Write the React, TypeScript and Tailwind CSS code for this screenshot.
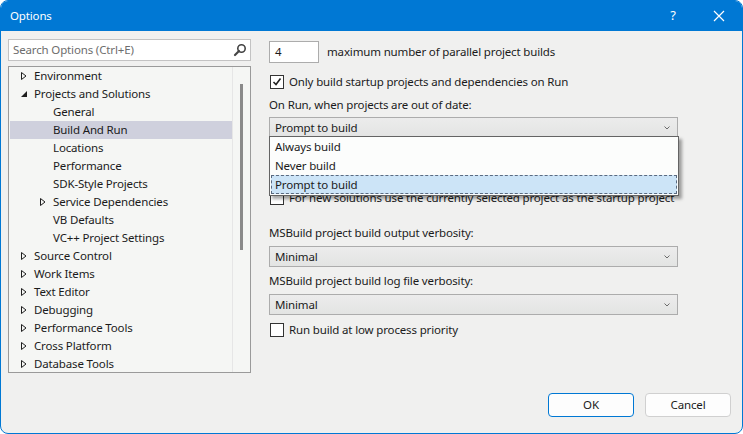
import React from 'react';

const font = { fontFamily: '"Segoe UI", "Noto Sans", "Open Sans", sans-serif', letterSpacing: '-0.15px' };

interface TreeItem {
  label: string;
  level: number;
  arrow?: 'closed' | 'open';
  selected?: boolean;
}

const TREE: TreeItem[] = [
  { label: 'Environment', level: 0, arrow: 'closed' },
  { label: 'Projects and Solutions', level: 0, arrow: 'open' },
  { label: 'General', level: 1 },
  { label: 'Build And Run', level: 1, selected: true },
  { label: 'Locations', level: 1 },
  { label: 'Performance', level: 1 },
  { label: 'SDK-Style Projects', level: 1 },
  { label: 'Service Dependencies', level: 1, arrow: 'closed' },
  { label: 'VB Defaults', level: 1 },
  { label: 'VC++ Project Settings', level: 1 },
  { label: 'Source Control', level: 0, arrow: 'closed' },
  { label: 'Work Items', level: 0, arrow: 'closed' },
  { label: 'Text Editor', level: 0, arrow: 'closed' },
  { label: 'Debugging', level: 0, arrow: 'closed' },
  { label: 'Performance Tools', level: 0, arrow: 'closed' },
  { label: 'Cross Platform', level: 0, arrow: 'closed' },
  { label: 'Database Tools', level: 0, arrow: 'closed' },
];

function Arrow({ kind }: { kind: 'closed' | 'open' }) {
  if (kind === 'open') {
    return (
      <svg width="8" height="8" viewBox="0 0 8 8">
        <path d="M7 1 L7 7 L1 7 Z" fill="#1e1e1e" />
      </svg>
    );
  }
  return (
    <svg width="8" height="10" viewBox="0 0 8 10">
      <path d="M1.5 1.5 L6 5 L1.5 8.5 Z" fill="none" stroke="#1e1e1e" strokeWidth="1" />
    </svg>
  );
}

function Chevron() {
  return (
    <svg width="8" height="6" viewBox="0 0 8 6">
      <path d="M1.5 1.5 L4 4 L6.5 1.5" fill="none" stroke="#6b6b6b" strokeWidth="1" />
    </svg>
  );
}

function Checkbox({ checked }: { checked?: boolean }) {
  return (
    <div className="w-[14px] h-[14px] border border-[#333333] bg-white flex items-center justify-center shrink-0">
      {checked && (
        <svg width="10" height="10" viewBox="0 0 10 10">
          <path d="M1.5 5 L4 7.5 L8.5 1.5" fill="none" stroke="#222222" strokeWidth="1.6" />
        </svg>
      )}
    </div>
  );
}

function Select({ value }: { value: string }) {
  return (
    <div className="h-[21px] w-[409px] border border-[#acacac] bg-gradient-to-b from-[#ececec] to-[#e3e4e3] flex items-center justify-between pl-[5px] pr-[6px]">
      <span>{value}</span>
      <Chevron />
    </div>
  );
}

export default function App() {
  return (
    <div
      className="w-[743px] h-[434px] bg-[#f0f0ef] border border-[#0078d4] rounded-[8px] overflow-hidden flex flex-col text-[11.5px] text-[#1b1b1b] relative"
      style={font}
    >
      <div className="h-[30px] bg-[#0078d4] flex items-center justify-between text-white shrink-0">
        <span className="pl-[9px]">Options</span>
        <div className="flex items-center">
          <span className="w-[46px] text-center text-[13px]">?</span>
          <span className="w-[46px] flex justify-center">
            <svg width="12" height="12" viewBox="0 0 12 12">
              <path d="M1 1 L11 11 M11 1 L1 11" stroke="white" strokeWidth="1.2" />
            </svg>
          </span>
        </div>
      </div>

      <div className="flex flex-1 pl-[7px] pt-[8px]">
        <div className="w-[243px] flex flex-col shrink-0">
          <div className="h-[22px] border border-[#c3c3c3] bg-white flex items-center justify-between pl-[4px] pr-[3px]">
            <span className="text-[#6d6d6d]">Search Options (Ctrl+E)</span>
            <svg width="14" height="14" viewBox="0 0 14 14">
              <circle cx="8.5" cy="5.5" r="3.7" fill="none" stroke="#444" strokeWidth="1.6" />
              <path d="M6 8 L2 12" stroke="#444" strokeWidth="2.2" strokeLinecap="round" />
            </svg>
          </div>
          <div className="mt-[5px] h-[307px] border border-[#9a9a9a] bg-[#f5f6f4] flex overflow-hidden">
            <div className="flex-1 pl-[1px]">
              {TREE.map((item) => (
                <div
                  key={item.label}
                  className={`h-[18px] flex items-center ${item.selected ? 'bg-[#cfd0dd]' : ''}`}
                >
                  <div className={`${item.level === 0 ? 'w-[24px] pl-[10px]' : 'w-[43px] pl-[29px]'} flex items-center`}>
                    {item.arrow && <Arrow kind={item.arrow} />}
                  </div>
                  <span>{item.label}</span>
                </div>
              ))}
            </div>
            <div className="w-[18px] border-l border-[#e6e6e6] flex justify-center pt-[17px]">
              <div className="w-[3px] h-[166px] bg-[#8a8a8a]" />
            </div>
          </div>
        </div>

        <div className="ml-[18px] flex flex-col relative">
          <div className="mt-[2px] flex items-center">
            <div className="w-[50px] h-[22px] border border-[#acacac] bg-white pl-[5px] flex items-center">4</div>
            <span className="ml-[8px]">maximum number of parallel project builds</span>
          </div>
          <div className="mt-[11px] flex items-center pl-[1px] h-[16px]">
            <Checkbox checked />
            <span className="ml-[5px]">Only build startup projects and dependencies on Run</span>
          </div>
          <div className="mt-[7px] h-[16px] flex items-center">On Run, when projects are out of date:</div>
          <div className="mt-[4px]">
            <Select value="Prompt to build" />
          </div>
          <div className="mt-[52px] flex items-center pl-[1px] h-[16px]">
            <Checkbox />
            <span className="ml-[5px]">For new solutions use the currently selected project as the startup project</span>
          </div>
          <div className="mt-[19px] h-[16px] flex items-center">MSBuild project build output verbosity:</div>
          <div className="mt-[5px]">
            <Select value="Minimal" />
          </div>
          <div className="mt-[6px] h-[16px] flex items-center">MSBuild project build log file verbosity:</div>
          <div className="mt-[5px]">
            <Select value="Minimal" />
          </div>
          <div className="mt-[7px] flex items-center pl-[1px] h-[16px]">
            <Checkbox />
            <span className="ml-[5px]">Run build at low process priority</span>
          </div>

          <div className="absolute left-0 top-[97px] w-[410px] border border-[#646464] bg-[#fcfdfc] shadow-[3px_3px_3px_rgba(0,0,0,0.35)] pb-[1px]">
            <div className="h-[19px] flex items-center pl-[5px]">Always build</div>
            <div className="h-[19px] flex items-center pl-[5px]">Never build</div>
            <div className="h-[19px] mx-[1px] bg-[#cce4f7] border border-dashed border-[#5a6a80] flex items-center pl-[3px]">
              Prompt to build
            </div>
          </div>
        </div>
      </div>

      <div className="flex justify-end gap-[11px] pr-[11px] pb-[16px]">
        <button className="w-[86px] h-[24px] rounded-[4px] border border-[#0078d4] bg-[#fdfdfd]" style={font}>
          OK
        </button>
        <button className="w-[86px] h-[24px] rounded-[4px] border border-[#d0d0d0] bg-[#fdfdfd]" style={font}>
          Cancel
        </button>
      </div>
    </div>
  );
}
